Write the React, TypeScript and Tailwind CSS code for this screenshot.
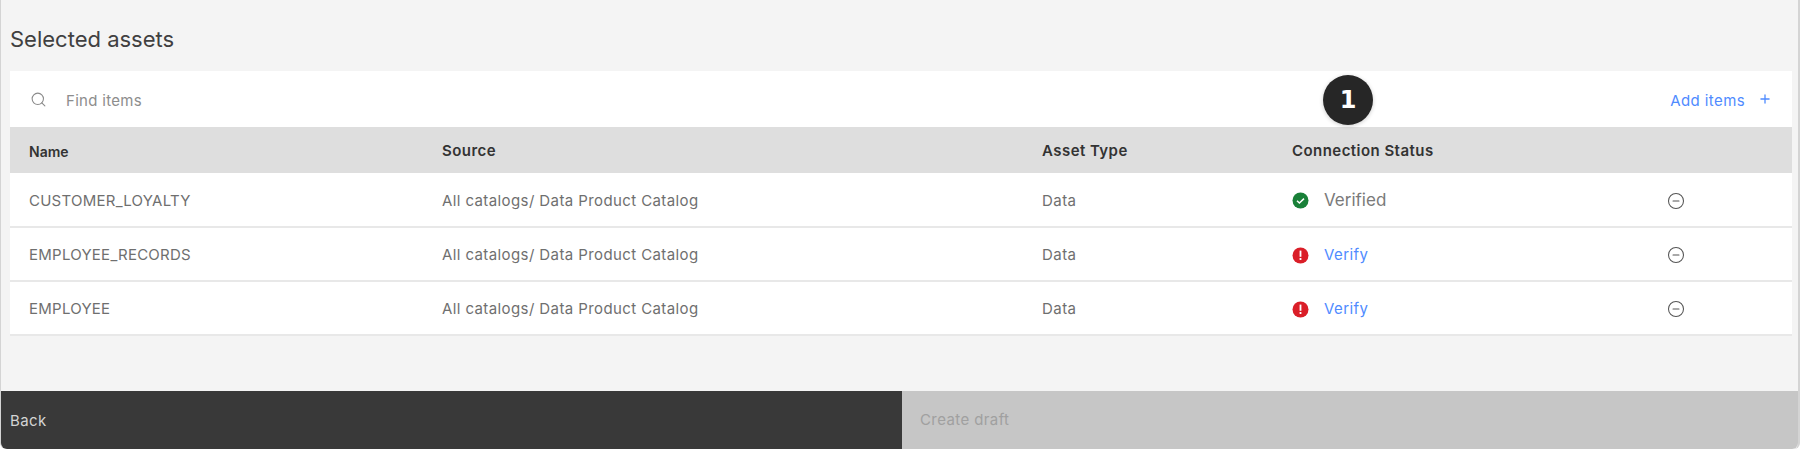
import { Search, Plus, CircleMinus } from 'lucide-react';

const ROWS = [
  { name: 'CUSTOMER_LOYALTY', verified: true },
  { name: 'EMPLOYEE_RECORDS', verified: false },
  { name: 'EMPLOYEE', verified: false },
];

const GRID = 'grid grid-cols-[413px_600px_250px_375px_1fr] pl-[19px]';

function VerifiedIcon() {
  return (
    <svg width="17" height="17" viewBox="0 0 17 17" className="shrink-0">
      <circle cx="8.5" cy="8.5" r="8" fill="#198038" />
      <path d="M5 8.7l2.4 2.3L12 6.6" fill="none" stroke="#fff" strokeWidth="1.5" />
    </svg>
  );
}

function ErrorIcon() {
  return (
    <svg width="17" height="17" viewBox="0 0 17 17" className="shrink-0">
      <circle cx="8.5" cy="8.5" r="8" fill="#da1e28" />
      <rect x="7.6" y="3.6" width="1.8" height="6.2" fill="#fff" />
      <rect x="7.6" y="11" width="1.8" height="2" fill="#fff" />
    </svg>
  );
}

export default function App() {
  return (
    <div className="relative flex h-[451px] w-[1800px] flex-col overflow-hidden bg-white font-['Inter','Noto_Sans',sans-serif]">
      <div className="flex h-[449px] flex-col rounded-b-md border-l border-r-2 border-[#d4d4d4] bg-[#f4f4f4]">
        <div className="flex-1 pl-[9px] pr-[6px]">
          <h2 className="flex h-[71px] items-center pt-[7px] text-[22px] leading-none text-[#404040]">Selected assets</h2>

          <div className="bg-white">
            {/* Toolbar */}
            <div className="flex h-[56px] items-center pl-[20px] pr-[20px]">
              <Search className="h-[17px] w-[17px] text-[#8a8a8a]" strokeWidth={1.5} />
              <span className="ml-[19px] pt-[4px] text-[15px] tracking-[0.3px] text-[#8d8d8d]">Find items</span>
              <button className="ml-auto flex items-center gap-[13px] text-[15px] tracking-[0.4px] text-[#4f8bff]">
                <span className="pt-[4px]">Add items</span>
                <Plus className="h-[14px] w-[14px]" strokeWidth={2.25} />
              </button>
            </div>

            {/* Header */}
            <div className={`${GRID} h-[46px] items-center bg-[#dedede] pt-[2px] text-[15px] font-semibold tracking-[0.45px] text-[#333333]`}>
              <span className="text-[14px] tracking-normal">Name</span>
              <span>Source</span>
              <span>Asset Type</span>
              <span>Connection Status</span>
              <span />
            </div>

            {/* Rows */}
            <div>
              {ROWS.map((row) => (
                <div
                  key={row.name}
                  className={`${GRID} h-[54px] items-center border-b-2 border-[#e8e8e8] pt-[2px] text-[15px] text-[#6f6f6f] first:h-[55px]`}
                >
                  <span className="pt-[1px] tracking-[0.25px]">{row.name}</span>
                  <span className="pt-[1px] tracking-[0.4px]">All catalogs/ Data Product Catalog</span>
                  <span className="pt-[1px] tracking-[0.45px]">Data</span>
                  <div className="flex items-center gap-[15px]">
                    {row.verified ? <VerifiedIcon /> : <ErrorIcon />}
                    {row.verified ? (
                      <span className="text-[17px] text-[#7a7a7a]">Verified</span>
                    ) : (
                      <span className="pt-[1px] text-[15px] tracking-[0.4px] text-[#4f8bff]">Verify</span>
                    )}
                  </div>
                  <CircleMinus className="h-[18px] w-[18px] text-[#555555]" strokeWidth={1.4} />
                </div>
              ))}
            </div>
          </div>
        </div>

        {/* Footer */}
        <div className="flex h-[58px] overflow-hidden rounded-b-md text-[15px] tracking-[0.4px]">
          <div className="flex w-[901px] items-center bg-[#393939] pl-[9px] pt-[2px] text-[#d4d4d4]">Back</div>
          <div className="flex flex-1 items-center bg-[#c6c6c6] pl-[18px] pt-[1px] text-[#a0a0a0]">Create draft</div>
        </div>
      </div>

      {/* Callout badge */}
      <div className="absolute left-[1323px] top-[75px] flex h-[50px] w-[50px] items-center justify-center rounded-full bg-[#262626] font-['DejaVu_Sans',sans-serif] text-[24px] font-bold text-white shadow-[0_1px_4px_rgba(0,0,0,0.2)]">
        1
      </div>
    </div>
  );
}
